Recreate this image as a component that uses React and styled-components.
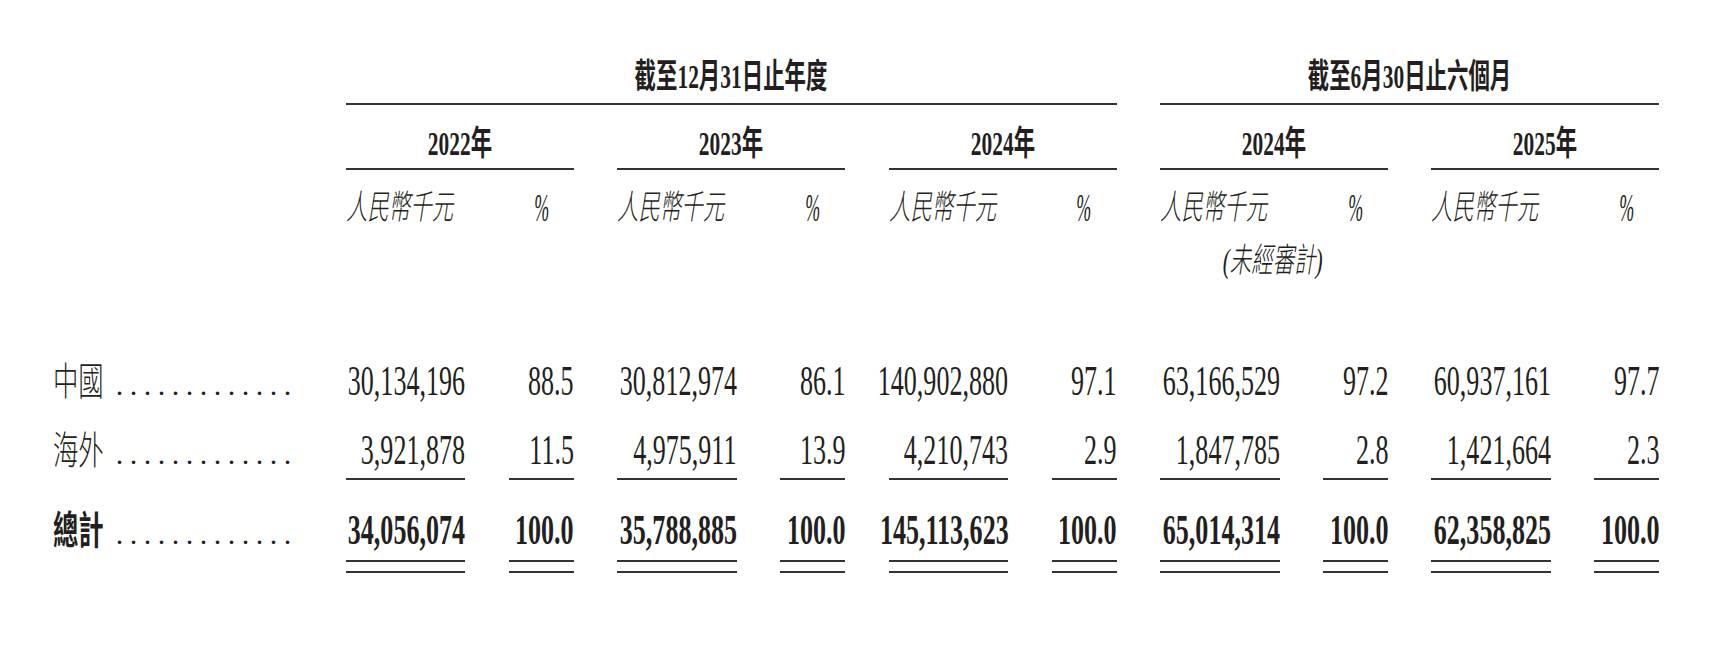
import React from "react";
import styled, { createGlobalStyle } from "styled-components";

const INK = "#231f20";
const RULE = "#333";
const FONT = `"Liberation Serif", "Noto Sans CJK TC", serif`;
const COLS = "302.5px repeat(5, 119.5px 65px)";

const GlobalStyle = createGlobalStyle`
  html, body {
    margin: 0;
    padding: 0;
    background: #fff;
  }
  body {
    font-family: ${FONT};
    color: ${INK};
  }
`;

const Page = styled.div`
  width: 1724px;
  height: 648px;
  padding-top: 57px;
  box-sizing: border-box;
  overflow: hidden;
`;

const Row = styled.div`
  display: grid;
  grid-template-columns: ${COLS};
  column-gap: 43.45px;
  align-items: ${(p) => p.$align || "start"};
  height: ${(p) => (p.$h ? `${p.$h}px` : "auto")};
  padding-top: ${(p) => p.$pt || 0}px;
`;

// text is set narrow in the source, so every run is squeezed horizontally
const Squeeze = styled.span`
  display: inline-block;
  flex-shrink: 0;
  white-space: nowrap;
  transform: scaleX(${(p) => p.$s || 0.63});
  transform-origin: ${(p) => p.$o || "center"};
`;

const Title = styled.div`
  grid-column: ${(p) => p.$col};
  display: flex;
  justify-content: center;
  font-size: 34px;
  font-weight: 700;
  line-height: 40px;
  padding-bottom: 6px;
  border-bottom: 2px solid ${RULE};
`;

const Year = styled.div`
  grid-column: ${(p) => p.$col};
  display: flex;
  justify-content: center;
  font-size: 34px;
  font-weight: 700;
  line-height: 40px;
  padding: 19px 0 4px;
  border-bottom: 2px solid ${RULE};
`;

const Unit = styled.div`
  grid-column: ${(p) => p.$col};
  display: flex;
  justify-content: ${(p) => p.$justify || "flex-start"};
  padding-right: ${(p) => p.$pr || 0}px;
  font-size: ${(p) => p.$size || 34}px;
  font-style: italic;
  font-weight: 300;
  line-height: 40px;
`;

const Body = styled.div`
  margin-top: 76.8px;
`;

const LabelCell = styled.div`
  display: flex;
  align-items: baseline;
  padding-left: 53px;
  font-size: 39px;
  line-height: 46px;
  font-weight: ${(p) => (p.$bold ? 700 : 300)};
`;

const LabelText = styled(Squeeze)`
  margin-right: -0.7em;
`;

const Leader = styled.span`
  margin-left: 12px;
  font-size: 30px;
  font-weight: 400;
  letter-spacing: 6.5px;
`;

const NumCell = styled.div`
  display: flex;
  justify-content: flex-end;
  font-size: 42px;
  line-height: 46px;
  font-weight: ${(p) => (p.$bold ? 700 : 400)};
  padding-bottom: ${(p) => (p.$rule === "single" ? 5.7 : p.$rule === "double" ? 9 : 0)}px;
  border-bottom: ${(p) => (p.$rule ? `2px solid ${RULE}` : "none")};
`;

const NumInner = styled.div`
  display: flex;
  justify-content: flex-end;
  width: 100%;
  padding-bottom: 6.9px;
  border-bottom: 2px solid ${RULE};
`;

const years = ["2022年", "2023年", "2024年", "2024年", "2025年"];

const rows = [
  {
    label: "中國",
    h: 69,
    vals: ["30,134,196", "88.5", "30,812,974", "86.1", "140,902,880", "97.1", "63,166,529", "97.2", "60,937,161", "97.7"],
  },
  {
    label: "海外",
    h: 80,
    rule: "single",
    vals: ["3,921,878", "11.5", "4,975,911", "13.9", "4,210,743", "2.9", "1,847,785", "2.8", "1,421,664", "2.3"],
  },
  {
    label: "總計",
    bold: true,
    rule: "double",
    vals: ["34,056,074", "100.0", "35,788,885", "100.0", "145,113,623", "100.0", "65,014,314", "100.0", "62,358,825", "100.0"],
  },
];

function Num({ value, bold, rule }) {
  const text = (
    <Squeeze $s={0.62} $o="right">
      {value}
    </Squeeze>
  );
  return (
    <NumCell $bold={bold} $rule={rule}>
      {rule === "double" ? <NumInner>{text}</NumInner> : text}
    </NumCell>
  );
}

export default function App() {
  return (
    <>
      <GlobalStyle />
      <Page>
        <Row>
          <Title $col="2 / span 6">
            <Squeeze>截至12月31日止年度</Squeeze>
          </Title>
          <Title $col="8 / span 4">
            <Squeeze>截至6月30日止六個月</Squeeze>
          </Title>
        </Row>

        <Row>
          {years.map((y, i) => (
            <Year key={i} $col={`${2 + i * 2} / span 2`}>
              <Squeeze>{y}</Squeeze>
            </Year>
          ))}
        </Row>

        <Row $pt={18}>
          {years.map((y, i) => (
            <React.Fragment key={i}>
              <Unit $col={`${2 + i * 2}`}>
                <Squeeze $o="left">人民幣千元</Squeeze>
              </Unit>
              <Unit $col={`${3 + i * 2}`} $justify="center" $size={40}>
                <Squeeze $s={0.45}>%</Squeeze>
              </Unit>
            </React.Fragment>
          ))}
        </Row>

        <Row $pt={13}>
          <Unit $col="8 / span 2" $justify="flex-end" $pr={65}>
            <Squeeze $o="right">(未經審計)</Squeeze>
          </Unit>
        </Row>

        <Body>
          {rows.map((r) => (
            <Row key={r.label} $align="baseline" $h={r.h}>
              <LabelCell $bold={r.bold}>
                <LabelText $s={0.65} $o="left">
                  {r.label}
                </LabelText>
                <Leader>.............</Leader>
              </LabelCell>
              {r.vals.map((v, i) => (
                <Num key={i} value={v} bold={r.bold} rule={r.rule} />
              ))}
            </Row>
          ))}
        </Body>
      </Page>
    </>
  );
}
